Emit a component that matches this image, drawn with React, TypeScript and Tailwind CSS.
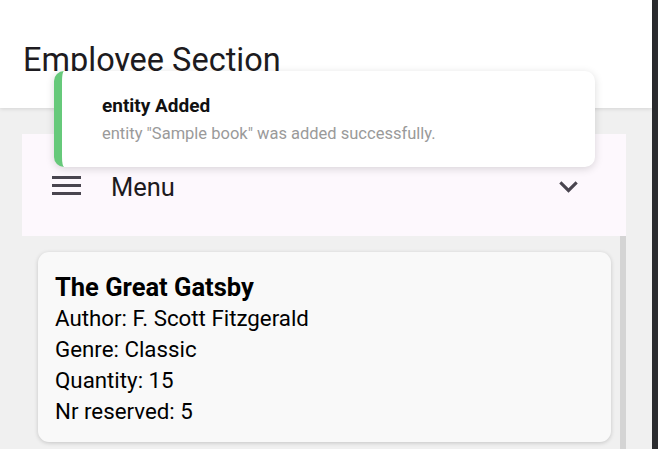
export default function App() {
  return (
    <div className="flex w-[658px] h-[449px] overflow-hidden bg-[#2b2c2f] font-['Roboto',sans-serif]">
      <div className="relative flex flex-col w-[652px] h-full bg-[#f0f0f0]">

        <header className="h-[108px] bg-white shadow-[0_1px_4px_rgba(0,0,0,0.12)] z-10 px-[23px] pt-[40px]">
          <h1 className="text-[32.5px] leading-[40px] text-[#1d1b20]">Employee Section</h1>
        </header>

        <div className="pl-[22px] pr-[26px] pt-[26px] flex flex-col flex-1 min-h-0">
          <div className="h-[102px] bg-[#fdf8fd] flex items-start pl-[30px] pr-[40px] pt-[34px]">
            <svg width="30" height="20" viewBox="0 0 30 20" className="mt-[8px]">
              <rect x="0" y="0" width="29" height="3" fill="#49454f" />
              <rect x="0" y="8" width="29" height="3" fill="#49454f" />
              <rect x="0" y="16" width="29" height="3" fill="#49454f" />
            </svg>
            <span className="ml-[29px] text-[25.5px] leading-[38px] text-[#1d1b20]">Menu</span>
            <svg width="37" height="37" viewBox="0 0 24 24" className="ml-auto -mr-[1px] mt-[0px]">
              <path d="M16.59 8.59L12 13.17 7.41 8.59 6 10l6 6 6-6z" fill="#49454f" />
            </svg>
          </div>

          <div className="flex flex-1 min-h-0">
            <div className="flex-1 pl-[16px] pr-[9px] pt-[16px]">
              <div className="bg-[#f9f9f9] rounded-[11px] shadow-[0_1px_4px_rgba(0,0,0,0.18)] pl-[17px] pt-[20px] pb-[15px] text-[22.3px] leading-[31px] text-black">
                <h3 className="font-bold text-[25.5px]">The Great Gatsby</h3>
                <p>Author: F. Scott Fitzgerald</p>
                <p>Genre: Classic</p>
                <p>Quantity: 15</p>
                <p>Nr reserved: 5</p>
              </div>
            </div>
            <div className="w-[6px] bg-[#d4d4d4]" />
          </div>
        </div>

        <div className="absolute left-[54px] top-[71px] w-[541px] h-[96px] z-20 bg-white rounded-[10px] border-l-[8px] border-[#66c97a] shadow-[0_2px_8px_rgba(0,0,0,0.15)] pl-[40px] pt-[23px]">
          <p className="text-[19px] leading-[24px] font-bold text-[#111]">entity Added</p>
          <p className="text-[16.5px] leading-[22px] mt-[5px] text-[#9a9a9a]">entity "Sample book" was added successfully.</p>
        </div>

      </div>
    </div>
  )
}
